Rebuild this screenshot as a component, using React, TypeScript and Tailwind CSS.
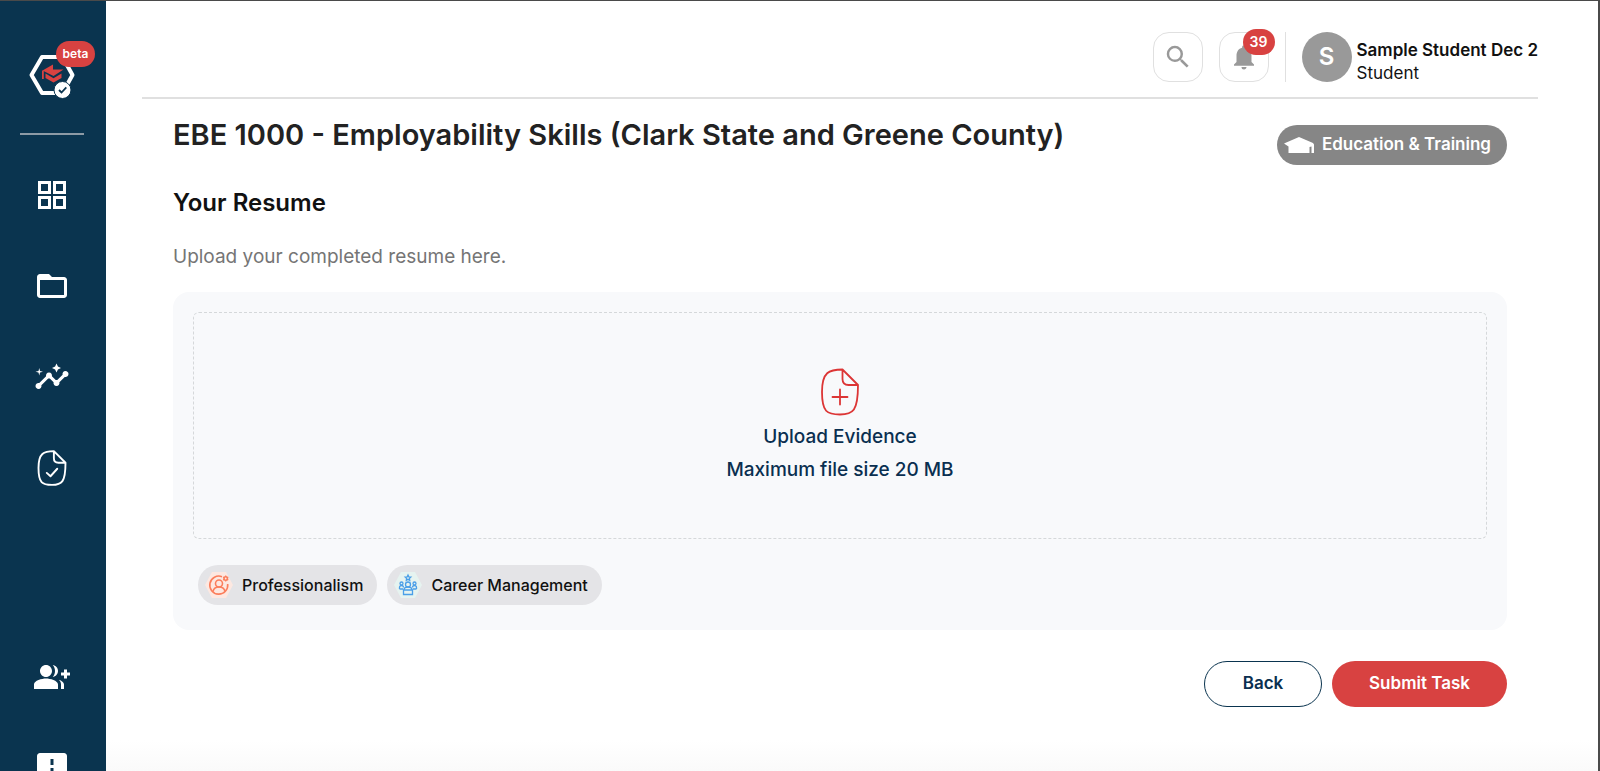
import { MdFolderOpen, MdInsights, MdGroupAdd, MdFeedback, MdSearch, MdNotifications } from "react-icons/md";
import type { ReactNode } from "react";

function Logo() {
  return (
    <svg viewBox="0 0 48 48" className="size-12" aria-hidden="true">
      <path d="M3.500 24 14 6h20.500l10 18-10 18H14z" fill="none" stroke="#fff" strokeWidth="4" strokeLinejoin="round" />
      <path d="M14.500 19.500 25 13.500v5h10.500L25.500 25z" fill="#d84241" />
      <path d="M14 19.500h1.800v8.500H14zM17.500 22.500l8 4.800 8-4.800v4.500L25.500 31.500l-8-4.500z" fill="#d84241" />
      <circle cx="34.500" cy="39" r="8.500" fill="#fff" stroke="#0a344f" strokeWidth="1" />
      <path d="m31 39 2.500 2.500 4.800-5.200" fill="none" stroke="#0a344f" strokeWidth="1.800" />
    </svg>
  );
}

function GridIcon() {
  return (
    <svg viewBox="0 0 36 36" className="size-9" fill="none" stroke="#fff" strokeWidth="3" aria-hidden="true">
      <path d="M5.500 5.500h10v10h-10zM20.500 5.500h10v10h-10zM5.500 20.500h10v10h-10zM20.500 20.500h10v10h-10z" />
    </svg>
  );
}

function PageIcon({ mark, className }: { mark: string; className: string }) {
  return (
    <svg viewBox="0 0 40 48" className={className} fill="none" stroke="currentColor" strokeLinecap="round" strokeLinejoin="round" aria-hidden="true">
      <path d="M22.500 1.500C9 1.500 2 4 2 24s5 22.500 18 22.500S38 43 38 17L22.500 1.500zM22.500 1.500V11c0 4 2 6 6 6H38" />
      <path d={mark} />
    </svg>
  );
}

function CapIcon() {
  return (
    <svg viewBox="0 0 30 18" className="h-[18px] w-[30px]" fill="currentColor" aria-hidden="true">
      <path d="M0 7.500 15 1l14 6 1 1.500V17h-2.500v-6.500L25.500 11v6H4.500v-6.500z" />
    </svg>
  );
}

function ProfessionalismIcon() {
  return (
    <svg viewBox="0 0 30 28" className="h-7 w-[30px]" aria-hidden="true">
      <path d="M8 1h14l7 13-7 13H8L1 14z" fill="#fde8e1" />
      <g fill="none" stroke="#fb7e5c" strokeWidth="1.600">
        <path d="M18 5.700A9 9 0 1 0 23.700 13" />
        <circle cx="15" cy="12.500" r="3.500" />
        <path d="M9 20.500c.5-3 3-4.500 6-4.500s5.500 1.500 6 4.500" />
        <circle cx="21.700" cy="7.500" r="1.700" />
        <path d="M21.700 4.500v1.500M21.700 9v1.500M19.100 6l1.300.8M23 8.200l1.300.8M24.300 6l-1.300.8M20.400 8.200l-1.300.8" strokeWidth="1.200" />
      </g>
    </svg>
  );
}

function CareerIcon() {
  return (
    <svg viewBox="0 0 30 28" className="h-7 w-[30px]" aria-hidden="true">
      <path d="M8 1h14l7 13-7 13H8L1 14z" fill="#e6f3f0" />
      <g fill="none" stroke="#4a9fe8" strokeWidth="1.300">
        <path d="m15 4 .8 1.800 2 .2-1.500 1.400.4 2L15 8.500l-1.700.9.4-2L12.200 6l2-.2z" />
        <circle cx="15" cy="13.500" r="2.500" />
        <path d="M11 19c0-2 2-3 4-3s4 1 4 3M10.500 19h9v4.500h-9z" />
        <circle cx="8.500" cy="12.500" r="1.500" />
        <circle cx="21.500" cy="12.500" r="1.500" />
        <path d="M6.500 18v-1.500c0-1.200 1-2 2-2s2 .8 2 2M23.500 18v-1.500c0-1.200-1-2-2-2s-2 .8-2 2M6.500 18H10M20 18h3.500" />
      </g>
    </svg>
  );
}

function NavLink({ label, children }: { label: string; children: ReactNode }) {
  return (
    <a href="#" aria-label={label} className="flex size-9 items-center justify-center text-white">
      {children}
    </a>
  );
}

function Chip({ icon, children }: { icon: ReactNode; children: ReactNode }) {
  return (
    <li className="flex h-10 items-center gap-2 rounded-full bg-[#e4e4e7] pr-[14px] pl-[6px] text-base font-medium text-[#111]">
      {icon}
      {children}
    </li>
  );
}

export default function App() {
  return (
    <div className="flex h-screen overflow-hidden border-t border-r-2 border-[#4a4a4a] bg-white font-[Inter,sans-serif] text-[#111]">
      <aside className="flex w-[106px] shrink-0 flex-col items-center overflow-hidden bg-[#0a344f] pr-[2px]">
        <a href="#" aria-label="Home" className="relative mt-[50px] shrink-0">
          <Logo />
          <span className="absolute -top-[10px] left-7 flex h-[26px] w-[39px] items-center justify-center rounded-full bg-[#d84241] text-xs font-semibold text-white">
            beta
          </span>
        </a>
        <hr className="mt-[34px] w-16 shrink-0 border-t-2 border-[#8d9aa5]" />
        <nav className="mt-[42px] flex flex-col gap-[55px]">
          <NavLink label="Dashboard"><GridIcon /></NavLink>
          <NavLink label="Folders"><MdFolderOpen size={36} /></NavLink>
          <NavLink label="Insights"><MdInsights size={36} /></NavLink>
          <NavLink label="Tasks">
            <PageIcon mark="m13 30.500 5 4.500 9-10" className="h-9 w-[30px] stroke-[2.5]" />
          </NavLink>
        </nav>
        <nav className="mt-[173px] flex flex-col gap-[55px]">
          <NavLink label="Invite"><MdGroupAdd size={36} /></NavLink>
          <NavLink label="Feedback"><MdFeedback size={36} /></NavLink>
        </nav>
      </aside>

      <div className="flex min-w-0 flex-1 flex-col bg-linear-to-b from-white from-96% to-[#fafafa] pr-[60px] pl-9">
        <header className="flex h-[98px] shrink-0 items-center justify-end border-b-2 border-[#e0e0e0] pt-4">
          <button aria-label="Search" className="flex size-[50px] items-center justify-center rounded-2xl border border-[#e0e0e0] text-[#999]">
            <MdSearch size={30} />
          </button>
          <button aria-label="Notifications" className="relative ml-4 flex size-[50px] items-center justify-center rounded-2xl border border-[#e0e0e0] text-[#999]">
            <MdNotifications size={30} />
            <span className="absolute -top-1 -right-[7px] flex h-[26px] w-8 items-center justify-center rounded-full bg-[#d84241] text-sm font-semibold text-white">
              39
            </span>
          </button>
          <div className="ml-4 h-[50px] w-px bg-[#e0e0e0]" />
          <div className="ml-4 flex size-[50px] items-center justify-center rounded-full bg-[#999] text-2xl font-semibold text-white">S</div>
          <div className="ml-[5px] pt-[10px] leading-[23px]">
            <p className="text-[17px] font-semibold">Sample Student Dec 2</p>
            <p className="text-[17px]">Student</p>
          </div>
        </header>

        <main className="px-[31px]">
          <div className="flex items-start justify-between">
            <h1 className="pt-[18px] text-[29px] leading-9 font-semibold text-[#222]">
              EBE 1000 - Employability Skills (Clark State and Greene County)
            </h1>
            <span className="mt-[26px] flex h-10 items-center gap-2 rounded-full bg-[#868686] pr-4 pl-[7px] text-[17px] font-semibold text-white">
              <CapIcon />
              Education &amp; Training
            </span>
          </div>
          <h2 className="mt-[22px] text-2xl leading-8 font-semibold">Your Resume</h2>
          <p className="mt-6 text-[19px] leading-7 text-[#757575]">Upload your completed resume here.</p>

          <section className="mt-[21px] rounded-2xl bg-[#f8f9fb] p-5">
            <button className="flex h-[227px] w-full flex-col items-center justify-center rounded-md border border-dashed border-[#d5d8da] pt-[2px] text-[19px] leading-[33px] font-medium text-[#0a2f50]">
              <PageIcon mark="M20 21.500v15M12.500 29h15" className="mb-1 h-12 w-10 stroke-[1.8] text-[#dc3535]" />
              <span>Upload Evidence</span>
              <span>Maximum file size 20 MB</span>
            </button>
            <ul className="mt-[26px] mb-[5px] ml-[5px] flex gap-[10px]">
              <Chip icon={<ProfessionalismIcon />}>Professionalism</Chip>
              <Chip icon={<CareerIcon />}>Career Management</Chip>
            </ul>
          </section>

          <div className="mt-[31px] flex justify-end gap-[10px] text-[17px] font-semibold">
            <button className="h-[46px] w-[118px] rounded-full border border-[#0a344f] bg-white text-[#0a2f50]">Back</button>
            <button className="h-[46px] w-[175px] rounded-full bg-[#d84241] text-white">Submit Task</button>
          </div>
        </main>
      </div>
    </div>
  );
}
